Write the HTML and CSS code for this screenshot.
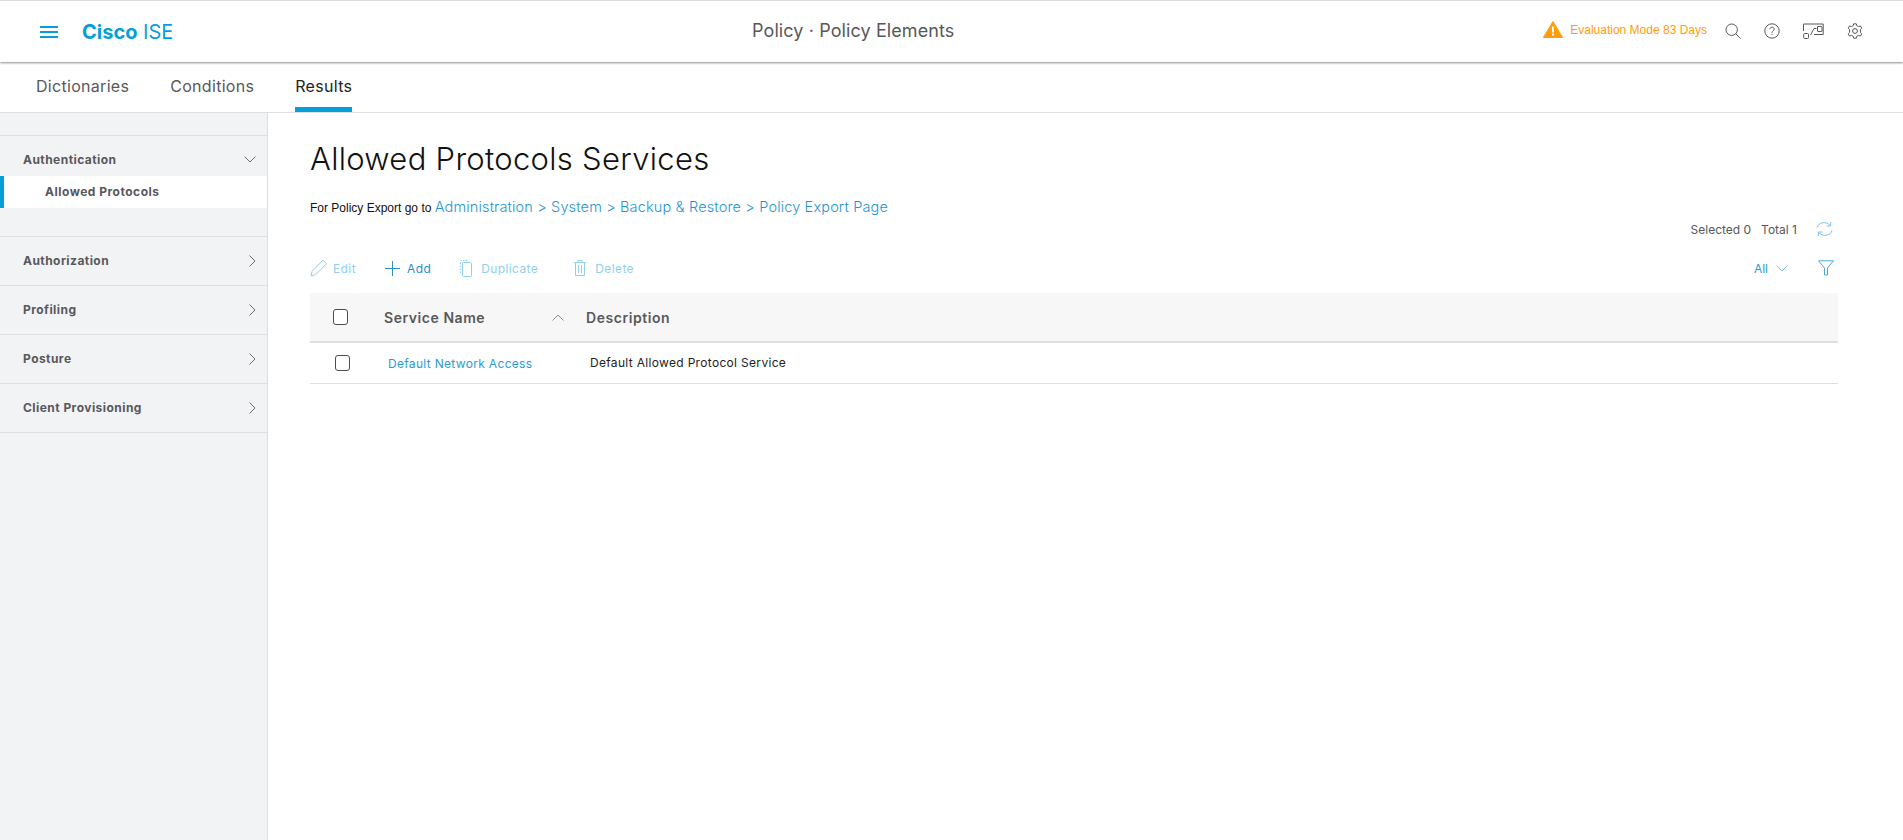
FILE: index.html
```html
<!DOCTYPE html>
<html lang="en">
<head>
    <meta charset="UTF-8">
    <title>Policy Elements</title>
    <link rel="stylesheet" href="styles.css">
</head>
<body>

    <header class="topbar">
        <div class="brand">
            <div class="burger"><span></span><span></span><span></span></div>
            <div class="logo"><b>Cisco</b> ISE</div>
        </div>
        <div class="page-title">Policy · Policy Elements</div>
        <div class="top-right">
            <svg class="warn-icon" width="20" height="17" viewBox="0 0 20 17">
                <path d="M10 0.5 L19.6 16.5 L0.4 16.5 Z" fill="#ff9d0a" stroke="#ff9d0a" stroke-linejoin="round"/>
                <rect x="9" y="5.5" width="2" height="6" fill="#fff"/>
                <rect x="9" y="12.6" width="2" height="2" fill="#fff"/>
            </svg>
            <span class="eval">Evaluation Mode 83 Days</span>
            <svg class="top-icon" width="16" height="16" viewBox="0 0 16 16" fill="none" stroke="#58585b">
                <circle cx="6.7" cy="6.7" r="5.7"/>
                <path d="M10.8 10.8 L15.6 15.6"/>
            </svg>
            <svg class="top-icon" width="16" height="16" viewBox="0 0 16 16" fill="none" stroke="#58585b">
                <circle cx="8" cy="8" r="7.2"/>
                <path d="M5.9 6.2 C5.9 3.6 10.2 3.6 10.2 6.2 C10.2 7.8 8 7.8 8 9.8"/>
                <path d="M8 11 L8 12"/>
            </svg>
            <svg class="top-icon" width="21" height="16" viewBox="0 0 21 16" fill="none" stroke="#58585b">
                <path d="M0.5 8 L0.5 1 L20.2 1 L20.2 11.5 L11 11.5"/>
                <rect x="14.5" y="3.5" width="4.5" height="5" rx="0.5"/>
                <rect x="0.7" y="10.5" width="4.8" height="5" rx="1"/>
                <path d="M7.5 12 L11 5.5 L13.5 5.5"/>
            </svg>
            <svg class="top-icon" width="16" height="16" viewBox="0 0 16 16" fill="none" stroke="#58585b">
                <path d="M6.7 0.8 L9.3 0.8 L9.8 2.7 L11.6 3.6 L13.4 2.9 L14.8 5.2 L13.4 6.6 L13.4 9.4 L14.8 10.8 L13.4 13.1 L11.6 12.4 L9.8 13.3 L9.3 15.2 L6.7 15.2 L6.2 13.3 L4.4 12.4 L2.6 13.1 L1.2 10.8 L2.6 9.4 L2.6 6.6 L1.2 5.2 L2.6 2.9 L4.4 3.6 L6.2 2.7 Z" stroke-linejoin="round"/>
                <circle cx="8" cy="8" r="2.4"/>
            </svg>
        </div>
    </header>

    <nav class="tabs">
        <a class="tab">Dictionaries</a>
        <a class="tab">Conditions</a>
        <a class="tab active">Results</a>
    </nav>

    <div class="main">
        <aside class="sidebar">
            <div class="side-group open">
                <div class="side-head">
                    <span>Authentication</span>
                    <svg width="12" height="7" viewBox="0 0 12 7" fill="none" stroke="#6b6f75"><path d="M0.5 0.5 L6 6 L11.5 0.5"/></svg>
                </div>
                <div class="side-item">Allowed Protocols</div>
            </div>
            <div class="side-group">
                <div class="side-head">
                    <span>Authorization</span>
                    <svg width="7" height="12" viewBox="0 0 7 12" fill="none" stroke="#6b6f75"><path d="M0.5 0.5 L6 6 L0.5 11.5"/></svg>
                </div>
            </div>
            <div class="side-group">
                <div class="side-head">
                    <span>Profiling</span>
                    <svg width="7" height="12" viewBox="0 0 7 12" fill="none" stroke="#6b6f75"><path d="M0.5 0.5 L6 6 L0.5 11.5"/></svg>
                </div>
            </div>
            <div class="side-group">
                <div class="side-head">
                    <span>Posture</span>
                    <svg width="7" height="12" viewBox="0 0 7 12" fill="none" stroke="#6b6f75"><path d="M0.5 0.5 L6 6 L0.5 11.5"/></svg>
                </div>
            </div>
            <div class="side-group">
                <div class="side-head">
                    <span>Client Provisioning</span>
                    <svg width="7" height="12" viewBox="0 0 7 12" fill="none" stroke="#6b6f75"><path d="M0.5 0.5 L6 6 L0.5 11.5"/></svg>
                </div>
            </div>
        </aside>

        <main class="content">
            <h1>Allowed Protocols Services</h1>
            <p class="export-note">For Policy Export go to <a>Administration &gt; System &gt; Backup &amp; Restore &gt; Policy Export Page</a></p>

            <div class="count-row">
                <span>Selected 0</span>
                <span>Total 1</span>
                <svg width="17" height="16" viewBox="0 0 17 16" fill="none" stroke="#7cc1ea">
                    <path d="M1 6.5 C2 1.5 10.5 -0.5 14 4.5"/>
                    <path d="M14.6 1 L14.6 5 L10.6 5"/>
                    <path d="M16 9.5 C15 14.5 6.5 16.5 3 11.5"/>
                    <path d="M2.4 15 L2.4 11 L6.4 11"/>
                </svg>
            </div>

            <div class="toolbar">
                <a class="tool disabled edit">
                    <svg width="18" height="18" viewBox="0 0 18 18" fill="none" stroke="#8fd0ee"><path d="M1 17 L2 12.5 L13 1.2 L16.6 4.6 L5.4 15.8 Z"/></svg>
                    Edit
                </a>
                <a class="tool">
                    <svg width="15" height="15" viewBox="0 0 15 15" fill="none" stroke="#2a8fc9"><path d="M7.5 0 L7.5 15 M0 7.5 L15 7.5"/></svg>
                    Add
                </a>
                <a class="tool disabled wide">
                    <svg width="12" height="17" viewBox="0 0 12 17" fill="none" stroke="#8fd0ee"><rect x="2.5" y="2.5" width="9" height="14" rx="1"/><path d="M0.5 13 L0.5 0.5 L9 0.5" stroke-dasharray="1.5 1.5"/></svg>
                    Duplicate
                </a>
                <a class="tool disabled wide">
                    <svg width="12" height="16" viewBox="0 0 12 16" fill="none" stroke="#8fd0ee"><path d="M0 2.5 L12 2.5 M4 2.5 L4 0.5 L8 0.5 L8 2.5"/><path d="M1.5 2.5 L1.5 15.5 L10.5 15.5 L10.5 2.5"/><path d="M4.5 5 L4.5 13 M7.5 5 L7.5 13"/></svg>
                    Delete
                </a>
                <div class="tool-right">
                    <a class="all-filter">
                        All
                        <svg width="12" height="7" viewBox="0 0 12 7" fill="none" stroke="#7cc1ea"><path d="M0.5 0.5 L6 6 L11.5 0.5"/></svg>
                    </a>
                    <svg width="16" height="16" viewBox="0 0 16 16" fill="none" stroke="#4fa8dc"><path d="M0.5 0.8 L15.5 0.8 L9.5 8 L9.5 15 L6.5 15 L6.5 8 Z"/></svg>
                </div>
            </div>

            <div class="table-head">
                <div class="check-cell"><span class="checkbox"></span></div>
                <div class="col-name">
                    Service Name
                    <svg width="12" height="7" viewBox="0 0 12 7" fill="none" stroke="#8a8d91"><path d="M0.5 6.5 L6 1 L11.5 6.5"/></svg>
                </div>
                <div class="col-desc">Description</div>
            </div>
            <div class="table-row">
                <div class="check-cell"><span class="checkbox"></span></div>
                <a class="row-name">Default Network Access</a>
                <div class="row-desc">Default Allowed Protocol Service</div>
            </div>
        </main>
    </div>

</body>
</html>
```

FILE: styles.css
```css
html, body {
    height: 100%;
}

body {
    margin: 0;
    padding: 0;
    font-family: Inter, Roboto, 'Liberation Sans', sans-serif;
    color: #333;
    background: #fff;
    display: flex;
    flex-direction: column;
    overflow: hidden;
}

/* top bar */
.topbar {
    height: 61px;
    flex: none;
    display: flex;
    align-items: center;
    border-top: 1px solid #dcdcdc;
    box-shadow: 0 1px 2px rgba(0, 0, 0, 0.45);
    background: #fff;
    position: relative;
}

.brand {
    width: 752px;
    padding-left: 40px;
    box-sizing: border-box;
    display: flex;
    align-items: center;
}

.burger {
    width: 18px;
    margin-right: 24px;
}

.burger span {
    display: block;
    height: 2px;
    background: #049fd9;
    margin: 3px 0;
}

.logo {
    font-size: 20px;
    color: #049fd9;
}

.logo b {
    font-weight: 700;
}

.page-title {
    font-size: 18px;
    letter-spacing: 0.1px;
    color: #58585b;
    margin-bottom: 2px;
}

.top-right {
    margin-left: auto;
    margin-bottom: 2px;
    padding-right: 40px;
    display: flex;
    align-items: center;
}

.warn-icon {
    margin-bottom: 2px;
}

.eval {
    font-family: 'Liberation Sans', sans-serif;
    font-size: 12px;
    color: #ff9d0a;
    margin: 0 18px 2px 7px;
}

.top-icon {
    margin-left: 23px;
}

.eval + .top-icon {
    margin-left: 0;
}

/* tabs */
.tabs {
    height: 50px;
    flex: none;
    display: flex;
    padding-left: 36px;
    gap: 41px;
    border-bottom: 1px solid #dfdfdf;
}

.tab {
    font-size: 16px;
    line-height: 48px;
    height: 50px;
    box-sizing: border-box;
    color: #58585b;
    letter-spacing: 0.3px;
}

.tab.active {
    color: #222;
    border-bottom: 5px solid #049fd9;
}

.main {
    flex: 1;
    display: flex;
}

/* side menu */
.sidebar {
    width: 268px;
    flex: none;
    box-sizing: border-box;
    background: #f2f3f5;
    border-right: 1px solid #dfdfdf;
    padding-top: 22px;
}

.side-group {
    border-top: 1px solid #dfdfdf;
    height: 48px;
}

.side-group:last-child {
    height: 48px;
    border-bottom: 1px solid #dfdfdf;
}

.side-group.open {
    height: 100px;
}

.side-head {
    height: 47px;
    display: flex;
    align-items: center;
    justify-content: space-between;
    padding: 0 11px 0 23px;
    font-size: 12px;
    font-weight: 700;
    color: #58585b;
    letter-spacing: 0.45px;
}

.side-head svg {
    flex: none;
}

.side-group.open .side-head {
    height: 40px;
    box-sizing: border-box;
    padding-top: 6px;
}

.side-item {
    height: 32px;
    line-height: 32px;
    background: #fff;
    border-left: 4px solid #049fd9;
    padding-left: 41px;
    font-size: 12px;
    font-weight: 700;
    color: #58585b;
    letter-spacing: 0.5px;
}

/* content */
.content {
    flex: 1;
    padding: 0 65px 0 42px;
    min-width: 0;
}

h1 {
    font-size: 31px;
    font-weight: 300;
    letter-spacing: 0.3px;
    color: #111;
    margin: 27px 0 0;
    line-height: 38px;
}

.export-note {
    font-family: 'Liberation Sans', sans-serif;
    font-size: 12px;
    color: #111;
    margin: 20px 0 0;
    line-height: 18px;
}

.export-note a {
    font-family: Inter, Roboto, sans-serif;
    font-size: 14.5px;
    font-weight: 300;
    color: #1f94d4;
    letter-spacing: 0.15px;
}

.count-row {
    display: flex;
    justify-content: flex-end;
    align-items: center;
    gap: 10px;
    margin-top: 0;
    padding-right: 5px;
    font-size: 12px;
    color: #58585b;
    height: 24px;
}

.count-row svg {
    margin-left: 9px;
}

.toolbar {
    display: flex;
    align-items: center;
    margin-top: 13px;
    height: 28px;
    font-size: 12px;
    letter-spacing: 0.4px;
}

.tool {
    display: flex;
    align-items: center;
    gap: 7px;
    color: #2a8fc9;
    margin-right: 29px;
}

.tool.disabled {
    color: #8fd0ee;
}

.tool.edit {
    gap: 5px;
}

.tool.wide {
    gap: 9px;
    margin-right: 36px;
}

.tool-right {
    margin-left: auto;
    display: flex;
    align-items: center;
    gap: 30px;
    padding-right: 4px;
}

.all-filter {
    display: flex;
    align-items: center;
    gap: 8px;
    color: #2a9bd8;
    letter-spacing: 0;
}

.table-head {
    margin-top: 11px;
    height: 50px;
    box-sizing: border-box;
    display: flex;
    align-items: center;
    background: #f7f7f7;
    border-bottom: 2px solid #dfdfdf;
    font-size: 14px;
    font-weight: 600;
    color: #58585b;
    letter-spacing: 0.55px;
}

.check-cell {
    width: 74px;
    flex: none;
    padding-left: 23px;
    box-sizing: border-box;
    display: flex;
    align-items: center;
}

.checkbox {
    width: 13px;
    height: 14px;
    border: 1px solid #4d4d4f;
    border-radius: 3px;
    display: block;
    background: #fff;
}

.col-name {
    width: 202px;
    flex: none;
    display: flex;
    align-items: center;
    justify-content: space-between;
    padding-right: 22px;
    box-sizing: border-box;
}

.table-row {
    height: 41px;
    box-sizing: border-box;
    display: flex;
    align-items: center;
    border-bottom: 1px solid #dfdfdf;
    font-size: 12px;
    letter-spacing: 0.32px;
}

.table-row .check-cell {
    padding-left: 25px;
    width: 78px;
}

.row-name {
    width: 202px;
    flex: none;
    color: #2a9bd8;
}

.row-desc {
    color: #222;
    margin-bottom: 2px;
}
```
